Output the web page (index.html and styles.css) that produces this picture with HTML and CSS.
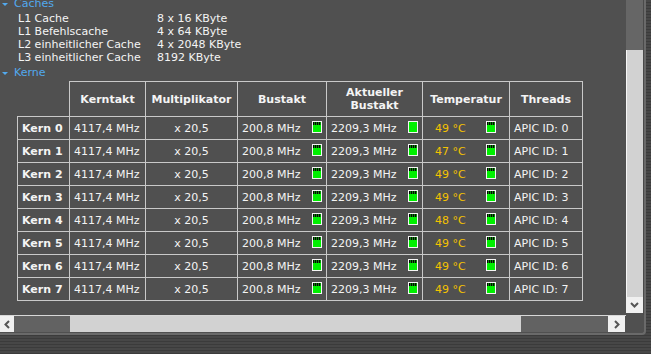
FILE: index.html
```html
<!DOCTYPE html>
<html lang="de">
<head>
  <meta charset="UTF-8" />
  <title>CPU Kerne</title>
  <link rel="stylesheet" href="styles.css">
</head>
<body>
  <div class="window">
    <div class="viewport">
      <div class="tree">
        <!-- Caches -->
        <div class="node-title"><span class="twisty"></span>Caches</div>
        <div class="props">
          <span>L1 Cache</span><span>8 x 16 KByte</span>
          <span>L1 Befehlscache</span><span>4 x 64 KByte</span>
          <span>L2 einheitlicher Cache</span><span>4 x 2048 KByte</span>
          <span>L3 einheitlicher Cache</span><span>8192 KByte</span>
        </div>

        <!-- Kerne -->
        <div class="node-title"><span class="twisty"></span>Kerne</div>
        <table class="cores">
          <colgroup>
            <col class="c-name"><col class="c-clock"><col class="c-mult"><col class="c-bus">
            <col class="c-cur"><col class="c-temp"><col class="c-thr">
          </colgroup>
          <thead>
            <tr>
              <th class="blank"></th>
              <th>Kerntakt</th>
              <th>Multiplikator</th>
              <th>Bustakt</th>
              <th>Aktueller<br>Bustakt</th>
              <th>Temperatur</th>
              <th>Threads</th>
            </tr>
          </thead>
          <tbody id="coreRows"></tbody>
        </table>
      </div>
    </div>

    <div class="vscroll">
      <div class="v-track"></div>
      <div class="v-thumb"></div>
      <div class="arrow">
        <svg width="9" height="6" viewBox="0 0 9 6"><path d="M1 1 L4.5 4.5 L8 1" fill="none" stroke="#555" stroke-width="2"/></svg>
      </div>
    </div>
    <div class="gap"></div>

    <div class="hscroll">
      <div class="arrow left">
        <svg width="6" height="9" viewBox="0 0 6 9"><path d="M5 1 L1.5 4.5 L5 8" fill="none" stroke="#555" stroke-width="2"/></svg>
      </div>
      <div class="h-track short"></div>
      <div class="h-thumb"></div>
      <div class="h-track"></div>
      <div class="arrow right">
        <svg width="6" height="9" viewBox="0 0 6 9"><path d="M1 1 L4.5 4.5 L1 8" fill="none" stroke="#555" stroke-width="2"/></svg>
      </div>
    </div>
    <div class="corner"></div>
  </div>

  <script>
    const temps = [49, 47, 49, 49, 48, 49, 49, 49];
    const rows = document.getElementById('coreRows');

    temps.forEach((t, i) => {
      const curMeter = i === 0 ? 'meter' : 'meter busy';
      rows.insertAdjacentHTML('beforeend', `
        <tr>
          <td class="name">Kern ${i}</td>
          <td class="clock">4117,4 MHz</td>
          <td class="mult">x 20,5</td>
          <td><div class="cell">200,8 MHz<span class="meter busy"></span></div></td>
          <td><div class="cell">2209,3 MHz<span class="${curMeter}"></span></div></td>
          <td><div class="cell temp"><span class="deg">${t} °C</span><span class="meter busy"></span></div></td>
          <td class="thr">APIC ID: ${i}</td>
        </tr>`);
    });
  </script>
</body>
</html>
```

FILE: styles.css
```css
body {
  margin: 0;
  height: 354px;
  overflow: hidden;
  font-family: "DejaVu Sans", Verdana, sans-serif;
  font-size: 11px;
  color: #f4f4f4;
  background: repeating-linear-gradient(to bottom, #474747 0 2px, #3b3b3b 2px 3px);
}
.window {
  width: 644px;
  height: 333px;
  display: grid;
  grid-template-columns: 626px 17px 1px;
  grid-template-rows: 315px 17px 1px;
  background: #505050;
  border-right: 2px solid #6a6a6a;
  border-bottom: 2px solid #6a6a6a;
  border-bottom-right-radius: 4px;
}
.viewport {
  overflow: hidden;
}
.tree {
  margin-top: -3px;
}
.node-title {
  line-height: 13px;
  padding-left: 14px;
  color: #52a9ee;
  position: relative;
  margin-bottom: 2px;
}
.twisty {
  position: absolute;
  left: 2px;
  top: 6px;
  border-left: 3px solid transparent;
  border-right: 3px solid transparent;
  border-top: 3px solid #52a9ee;
}
.props {
  display: grid;
  grid-template-columns: 139px auto;
  line-height: 13px;
  padding-left: 18px;
  margin-bottom: 2px;
}
.cores {
  border-collapse: collapse;
  table-layout: fixed;
  margin-left: 17px;
  margin-top: 2px;
}
.c-name { width: 52px; }
.c-clock { width: 76px; }
.c-mult { width: 92px; }
.c-bus { width: 89px; }
.c-cur { width: 96px; }
.c-temp { width: 87px; }
.c-thr { width: 73px; }
.cores th,
.cores td {
  border: 1px solid #c9c9c9;
  padding: 0 4px;
  white-space: nowrap;
}
.cores th {
  height: 34px;
  font-weight: bold;
  line-height: 13px;
  text-align: center;
  padding: 0;
}
.cores th.blank {
  border: none;
}
.cores td {
  height: 22px;
}
.cores td.name {
  font-weight: bold;
}
.cores td.mult {
  text-align: center;
}
.cell {
  display: flex;
  align-items: center;
  justify-content: space-between;
}
.cell.temp {
  padding: 0 9px 0 8px;
}
.deg {
  color: #f4c300;
}
.meter {
  width: 10px;
  height: 12px;
  box-sizing: border-box;
  border: 1px solid #f4f4f4;
  background: #00f000;
  margin-bottom: 2px;
}
.meter.busy {
  background:
    linear-gradient(#00f000, #00f000) 0 3px / 100% 100% no-repeat,
    repeating-linear-gradient(90deg, #050505 0 1px, #0a8a0a 1px 2px);
}
.vscroll {
  height: 313px;
  display: flex;
  flex-direction: column;
}
.v-track {
  height: 50px;
  background: #666;
}
.v-thumb {
  flex: 1;
  background: #d2d2d2;
  border-left: 1px solid #f6f6f6;
}
.vscroll .arrow {
  height: 16px;
}
.arrow {
  background: #f0f0f0;
  display: flex;
  align-items: center;
  justify-content: center;
}
.gap {
  background: #4a4a4a;
}
.hscroll {
  display: flex;
  border-top: 1px solid #d8d8d8;
  height: 16px;
}
.hscroll .arrow.left {
  width: 14px;
}
.hscroll .arrow.right {
  width: 17px;
}
.h-track {
  width: 87px;
  background: #626262;
}
.h-track.short {
  width: 56px;
}
.h-thumb {
  width: 451px;
  background: #d2d2d2;
}
.corner {
  background: #505050;
}
```
